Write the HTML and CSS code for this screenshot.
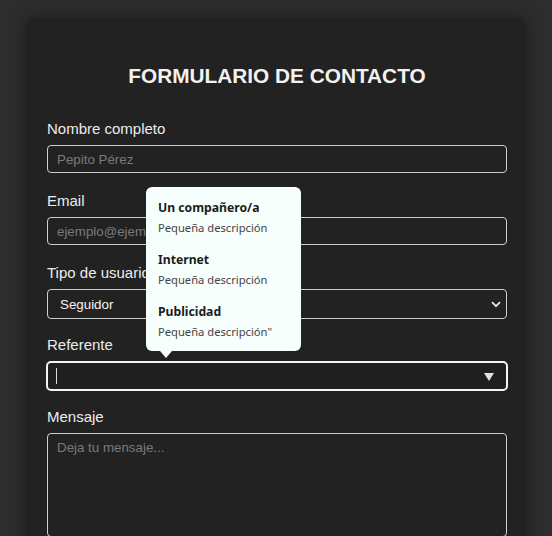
FILE: index.html
```html
<!DOCTYPE html>
<html lang="es">
<head>
<meta charset="utf-8">
<title>Formulario de contacto</title>
<link rel="stylesheet" href="styles.css">
</head>
<body>
<main class="card">
  <h1 class="title">FORMULARIO DE CONTACTO</h1>

  <div class="group">
    <label class="label">Nombre completo</label>
    <div class="field"><span class="placeholder">Pepito Pérez</span></div>
  </div>

  <div class="group">
    <label class="label">Email</label>
    <div class="field"><span class="placeholder">ejemplo@ejemplo.com</span></div>
  </div>

  <div class="group group-select">
    <label class="label">Tipo de usuario</label>
    <div class="field select">
      <span class="value">Seguidor</span>
      <svg class="chevron" width="10" height="7" viewBox="0 0 10 7"><path d="M1 1.2 L5 5.2 L9 1.2" fill="none" stroke="#e6e6e6" stroke-width="1.8"/></svg>
    </div>
  </div>

  <div class="group group-select">
    <label class="label">Referente</label>
    <div class="field combo">
      <span class="caret"></span>
      <span class="triangle"></span>
    </div>
  </div>

  <div class="group">
    <label class="label">Mensaje</label>
    <div class="field textarea"><span class="placeholder">Deja tu mensaje...</span></div>
  </div>

  <div class="popover">
    <div class="item">
      <div class="item-title">Un compañero/a</div>
      <div class="item-desc">Pequeña descripción</div>
    </div>
    <div class="item">
      <div class="item-title">Internet</div>
      <div class="item-desc">Pequeña descripción</div>
    </div>
    <div class="item">
      <div class="item-title">Publicidad</div>
      <div class="item-desc">Pequeña descripción"</div>
    </div>
  </div>
</main>
</body>
</html>
```

FILE: styles.css
```css
* { box-sizing: border-box; }
html, body { margin: 0; padding: 0; }
body {
  background: #2d2d2d;
  font-family: "Liberation Sans", Arial, sans-serif;
  padding-top: 18px;
  height: 536px;
  overflow: hidden;
}
.card {
  position: relative;
  width: 500px;
  margin: 0 auto;
  background: #222222;
  border-radius: 8px;
  padding: 20px 19px 40px 21px;
  box-shadow: 0 0 18px rgba(0, 0, 0, 0.35);
  min-height: 600px;
}
.title {
  margin: 26px 0 32px;
  font-size: 20.8px;
  line-height: 24px;
  font-weight: bold;
  text-align: center;
  color: #f2f2f2;
}
.group { margin-bottom: 19px; }
.group-select { margin-bottom: 17px; }
.label {
  display: block;
  font-size: 15px;
  line-height: 18px;
  color: #ececec;
  margin-bottom: 7px;
}
.field {
  height: 28px;
  border: 1px solid #cfcfcf;
  border-radius: 4px;
  display: flex;
  align-items: center;
  padding: 0 9px;
  font-size: 13.33px;
  background: #222222;
}
.placeholder { color: #7a7a7a; }
.select {
  height: 30px;
  padding: 0 5px 0 12px;
  justify-content: space-between;
}
.value { color: #f4f4f4; font-size: 13.33px; }
.chevron { display: block; }
.combo {
  height: 30px;
  margin-left: -1px;
  margin-right: -1px;
  border: 2px solid #f4f4f4;
  border-radius: 5px;
  padding: 0 12px 0 8px;
  justify-content: space-between;
  background: #1f1f1f;
}
.caret {
  width: 1px;
  height: 16px;
  background: #d8d8d8;
}
.triangle {
  width: 0;
  height: 0;
  border-left: 5px solid transparent;
  border-right: 5px solid transparent;
  border-top: 8px solid #e0e0e0;
  margin-top: 1px;
}
.textarea {
  height: 104px;
  align-items: flex-start;
  padding-top: 6px;
}
.popover {
  position: absolute;
  left: 120px;
  top: 169px;
  width: 155px;
  height: 164px;
  background: #f7fffd;
  border-radius: 6px;
  padding: 12px 12px 11px;
  font-family: "Noto Sans", "Open Sans", sans-serif;
}
.popover::after {
  content: "";
  position: absolute;
  left: 14px;
  bottom: -7px;
  border-left: 6px solid transparent;
  border-right: 6px solid transparent;
  border-top: 7px solid #f7fffd;
}
.item { margin-bottom: 15px; }
.item:last-child { margin-bottom: 0; }
.item-title {
  font-size: 12.2px;
  line-height: 18px;
  font-weight: bold;
  color: #1c1c1c;
  margin-bottom: 3px;
}
.item-desc {
  font-size: 11.2px;
  line-height: 16px;
  color: #444;
}
```
